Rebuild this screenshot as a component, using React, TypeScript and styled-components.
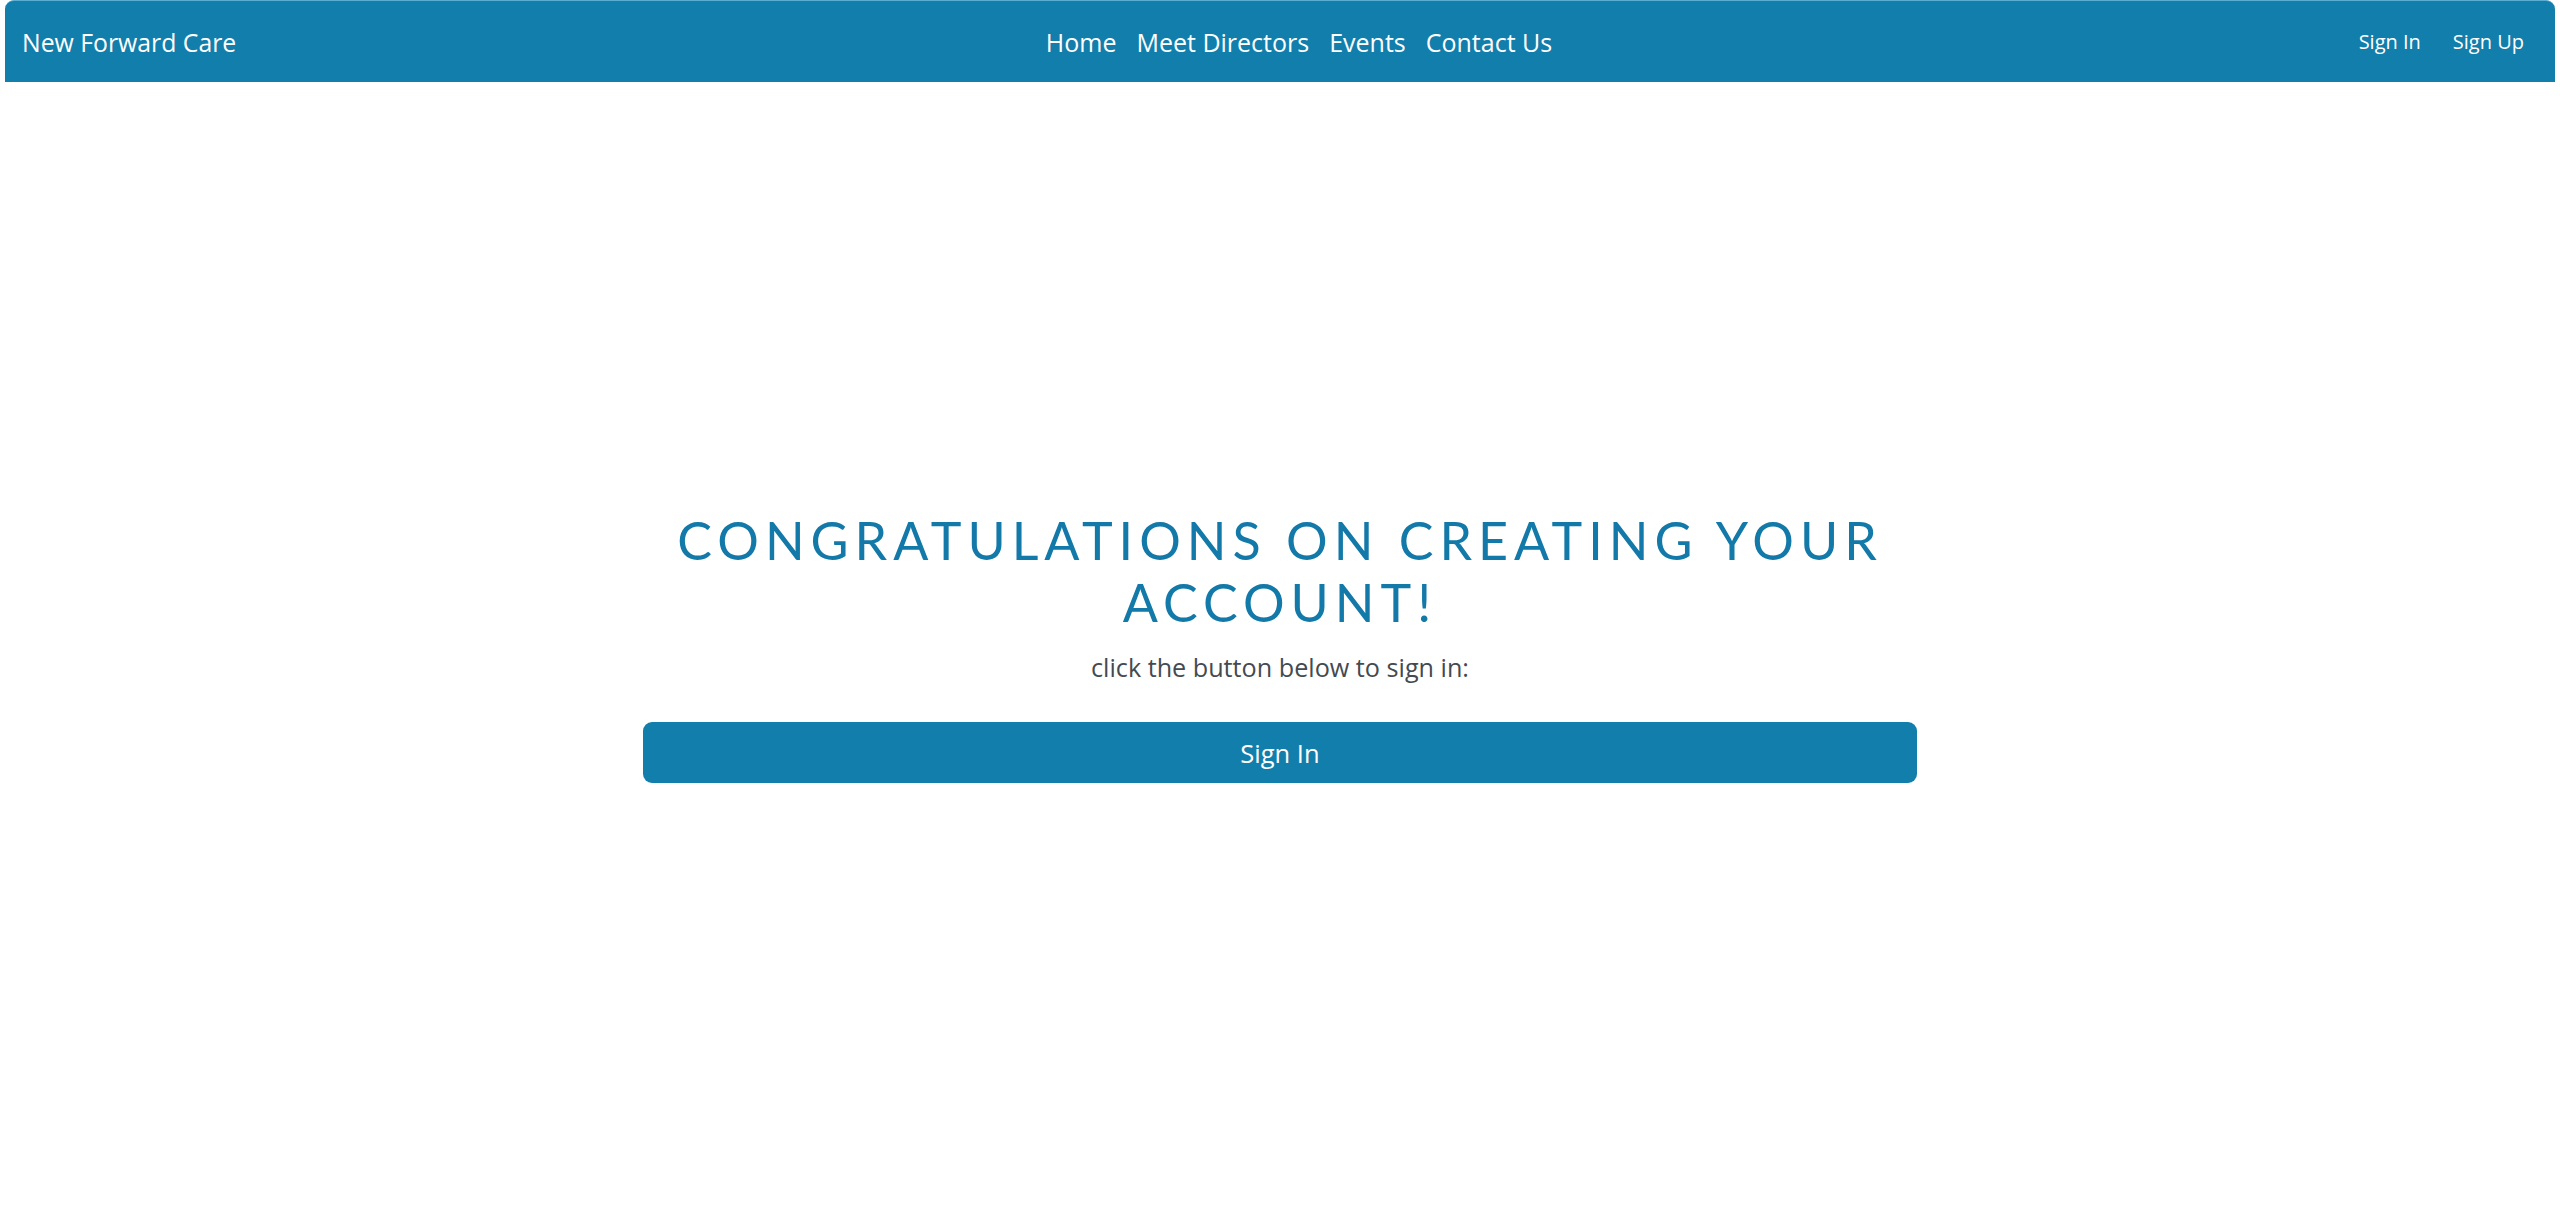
import React from "react";
import styled, { createGlobalStyle } from "styled-components";

const GlobalStyle = createGlobalStyle`
  html, body {
    margin: 0;
    padding: 0;
    background: #ffffff;
  }
  body {
    font-family: "Open Sans", "Noto Sans", sans-serif;
  }
  * { box-sizing: border-box; }
`;

const Page = styled.div`
  min-height: 100vh;
  display: flex;
  flex-direction: column;
`;

const NavBar = styled.nav`
  margin: 0 5px;
  height: 82px;
  background: #127eab;
  border-top: 1px solid #5aaed3;
  border-radius: 9px 9px 0 0;
  display: grid;
  grid-template-columns: 1fr auto 1fr;
  align-items: center;
  padding: 0 31px 0 17px;
`;

const Brand = styled.a`
  color: #ffffff;
  font-size: 24.8px;
  text-decoration: none;
  justify-self: start;
`;

const LinkGroup = styled.div`
  display: flex;
  gap: 20px;
  margin-left: 52px;
`;

const NavLink = styled.a<{ $small?: boolean }>`
  color: #ffffff;
  text-decoration: none;
  font-size: ${(p) => (p.$small ? "20px" : "25px")};
`;

const AuthGroup = styled.div`
  justify-self: end;
  display: flex;
  gap: 32px;
`;

const Main = styled.main`
  flex: 1;
  display: flex;
  align-items: center;
  justify-content: center;
`;

const Card = styled.section`
  width: 1274px;
  text-align: center;
  margin-bottom: 9px;
`;

const Title = styled.h1`
  margin: 0;
  font-family: "Lato", sans-serif;
  font-weight: 400;
  font-size: 52px;
  line-height: 62px;
  letter-spacing: 6px;
  color: #1279a8;
  text-transform: uppercase;
`;

const Subtitle = styled.p`
  margin: 17px 0 0;
  font-size: 25.2px;
  line-height: 34px;
  color: #444a50;
`;

const PrimaryButton = styled.button`
  margin-top: 38px;
  width: 100%;
  height: 61px;
  border: none;
  border-radius: 9px;
  background: #127eab;
  color: #ffffff;
  font-family: "Open Sans", "Noto Sans", sans-serif;
  font-size: 25.5px;
  cursor: pointer;
`;

export default function App() {
  return (
    <Page>
      <GlobalStyle />
      <NavBar>
        <Brand href="#">New Forward Care</Brand>
        <LinkGroup>
          <NavLink href="#">Home</NavLink>
          <NavLink href="#">Meet Directors</NavLink>
          <NavLink href="#">Events</NavLink>
          <NavLink href="#">Contact Us</NavLink>
        </LinkGroup>
        <AuthGroup>
          <NavLink $small href="#">Sign In</NavLink>
          <NavLink $small href="#">Sign Up</NavLink>
        </AuthGroup>
      </NavBar>
      <Main>
        <Card>
          <Title>Congratulations on creating your account!</Title>
          <Subtitle>click the button below to sign in:</Subtitle>
          <PrimaryButton>Sign In</PrimaryButton>
        </Card>
      </Main>
    </Page>
  );
}
